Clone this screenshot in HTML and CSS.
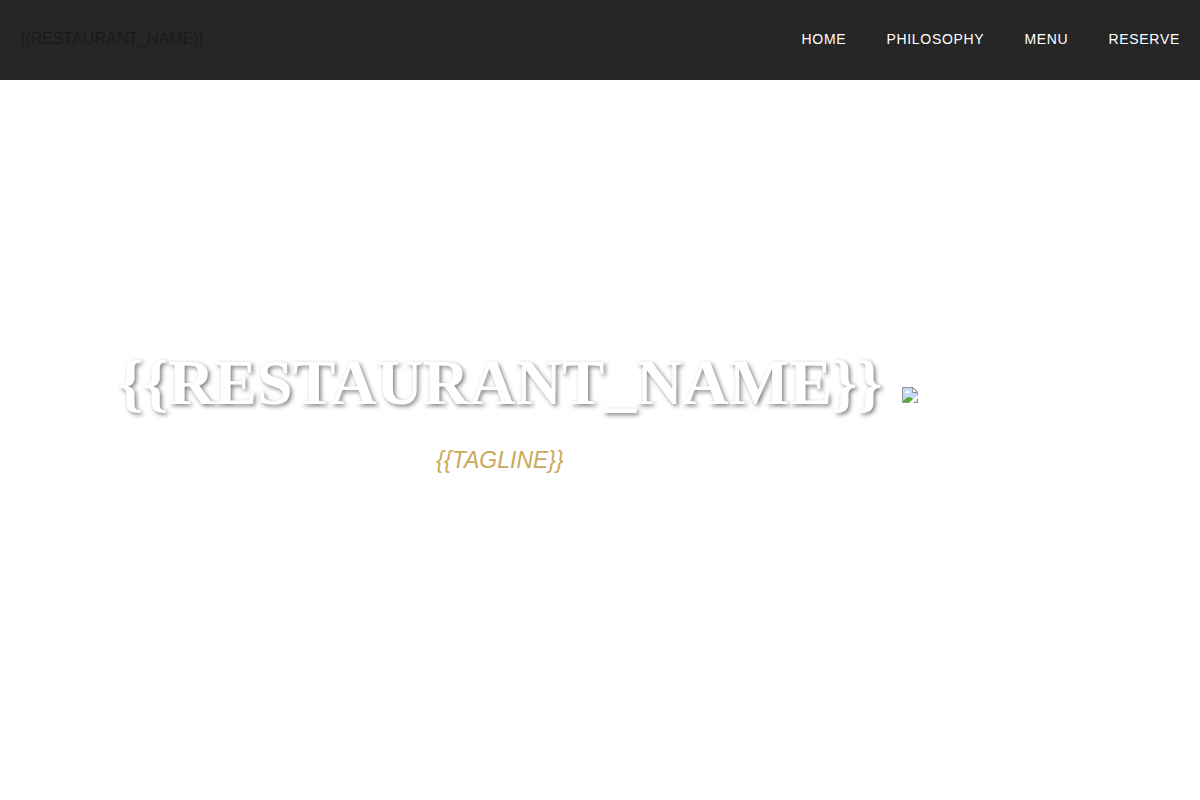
FILE: index.html
```html
<!DOCTYPE html>
<html lang="en">
<head>
<meta charset="utf-8">
<title>{{RESTAURANT_NAME}}</title>
<link rel="stylesheet" href="styles.css">
</head>
<body>
<header class="header">
  <div class="brand">{{RESTAURANT_NAME}}</div>
  <nav class="nav">
    <a href="#home">Home</a>
    <a href="#philosophy">Philosophy</a>
    <a href="#menu">Menu</a>
    <a href="#reserve">Reserve</a>
  </nav>
</header>
<main class="hero" id="home">
  <div class="hero-content">
    <h1 class="title">{{RESTAURANT_NAME}}</h1>
    <p class="tagline">{{TAGLINE}}</p>
  </div>
  <figure class="hero-image">
    <svg class="missing" width="16" height="16" viewBox="0 0 16 16" role="img" aria-label="Image unavailable">
      <path d="M.5.5h10.500l4.500 4.500v10.500H.5z" fill="#c6d8f8"/>
      <path d="M1 15v-1c2-1 3-4 6-4 2 0 3 1 4 2l-3 3z" fill="#55ac35"/>
      <path d="M3 6c0-1 1-1 1-1 0-2 3-2 3 0 1 0 1 1 1 1z" fill="#fff"/>
      <path d="M.5 15.500V.5H11l4.500 4.500v10.500z" fill="none" stroke="#919191"/>
      <path d="M10.500.5v5h5z" fill="#fff" stroke="#919191"/>
      <path d="M12 0h4v4z" fill="#fff"/>
      <path d="M7 16l9-8v3l-5 5z" fill="#fff"/>
    </svg>
  </figure>
</main>
</body>
</html>
```
FILE: styles.css
```css
* { box-sizing: border-box; margin: 0; padding: 0; }
body {
  font-family: "Liberation Sans", Arial, sans-serif;
  font-size: 16px;
  line-height: 26px;
  color: #1a1a1a;
  background: #fff;
  min-height: 100vh;
}
.header {
  display: flex;
  align-items: center;
  justify-content: space-between;
  min-height: 80px;
  padding: 0 20px 2px;
  background: #262626;
}
.nav { display: flex; gap: 40px; }
.nav a {
  color: #fff;
  font-size: 14px;
  letter-spacing: 0.05em;
  text-decoration: none;
  text-transform: uppercase;
}
.hero {
  display: flex;
  align-items: center;
  justify-content: center;
  min-height: calc(100vh - 80px);
  padding-bottom: 56px;
}
.hero-content {
  padding: 0 20px;
  text-align: center;
}
.hero-image {
  width: 200px;
  height: 50px;
}
.missing { display: block; }
.title {
  font-family: "Liberation Serif", "Times New Roman", serif;
  font-size: 64px;
  line-height: 76px;
  color: #fff;
  text-shadow: 2px 2px 4px rgba(0, 0, 0, 0.5);
}
.tagline {
  margin-top: 20px;
  font-size: 23px;
  line-height: 38px;
  font-style: italic;
  color: #c9a959;
}
```
